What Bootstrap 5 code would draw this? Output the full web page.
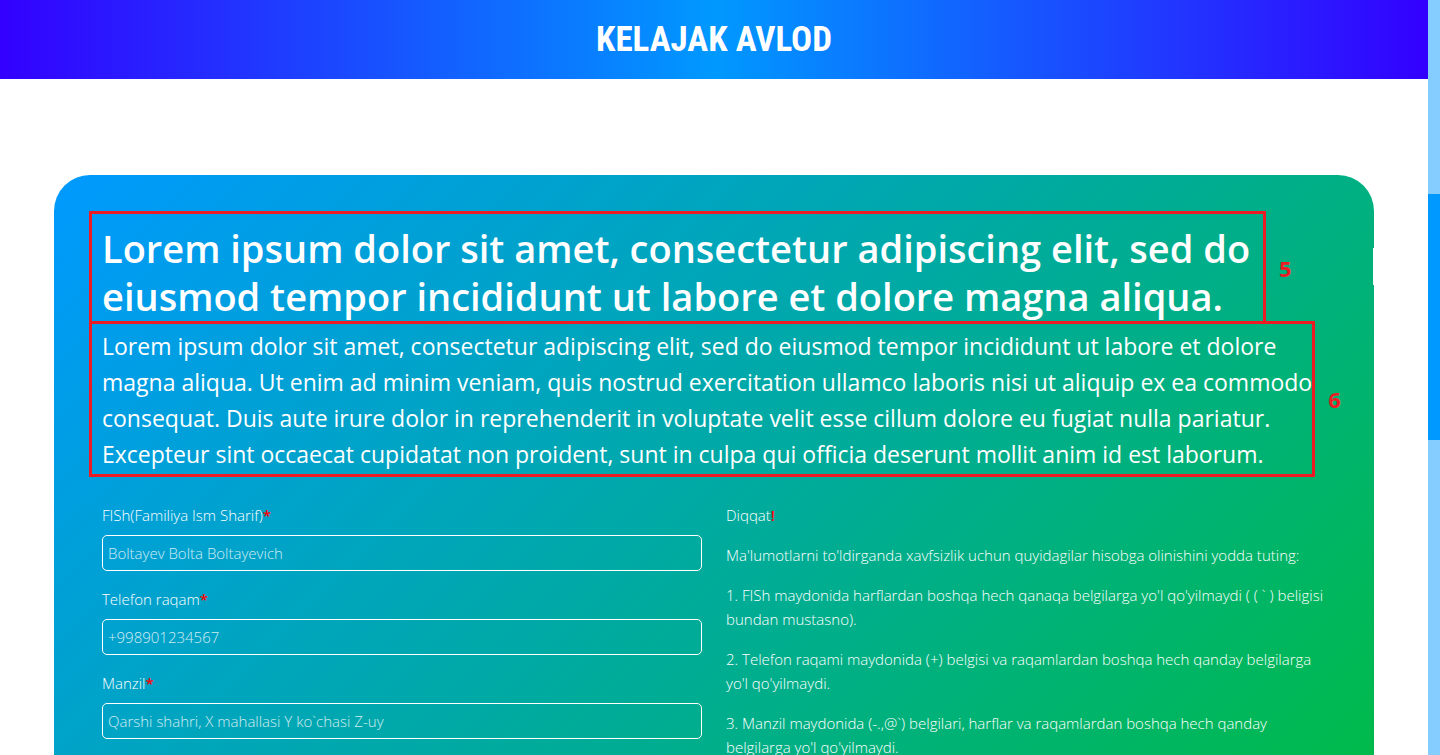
<!DOCTYPE html>
<html lang="uz">
<head>
<meta charset="utf-8">
<meta name="viewport" content="width=device-width, initial-scale=1">
<title>Kelajak Avlod</title>
<link href="https://cdn.jsdelivr.net/npm/bootstrap@5.3.0/dist/css/bootstrap.min.css" rel="stylesheet">
<style>
  body { font-family: "Open Sans", "Noto Sans", sans-serif; font-weight: 300; }
  .site-header { min-height: 79px; background: linear-gradient(90deg, #3300ff, #0099ff, #3300ff); }
  .site-logo { font: 700 35px/48px "Roboto Condensed", Roboto, sans-serif; }
  .page-main { padding-top: 96px; }
  .form-panel { position: relative; padding: 36px 48px 0 35px; min-height: 650px; border-radius: 36px 36px 0 0; background: linear-gradient(135deg, #0099ff, #00bb44); }
  .form-panel::after { content: ""; position: absolute; top: 73px; right: 0; width: 1px; height: 37px; background: #fff; }
  .frame { position: relative; border: 3px solid #ed1c24; padding-left: 10px; width: fit-content; white-space: nowrap; }
  .frame-title { min-width: min(1177px, 96%); padding-top: 10px; height: 113px; }
  .frame-text { min-width: min(1226px, 100%); margin-top: -3px; padding-top: 4px; height: 156px; }
  .frame-title h1 { font-size: 38px; font-weight: 600; line-height: 48px; }
  .frame-text p { font-size: 23px; font-weight: 400; line-height: 36px; }
  .frame-no { position: absolute; left: 100%; top: 50%; translate: 0 -50%; margin-left: 16px; color: #ed1c24; font-size: 22px; font-weight: 700; line-height: 30px; }
  .form-area { padding-left: 13px; margin-top: 26px; font-size: 15px; line-height: 24px; }
  .req { color: #f00; font-weight: 600; }
  .form-area .form-control { height: 36px; padding: 0 5px; background: transparent; border-color: #fff; border-radius: 5px; color: #fff; font-size: 15px; font-weight: 300; }
  .form-area .form-control::placeholder { color: #fff; opacity: .8; }
  .side-track { width: 12px; background: #85ccff; display: grid; grid-template-rows: 194fr 246fr 315fr; }
  .side-thumb { grid-row: 2; background: #0099ff; }
</style>
</head>
<body>
<div class="d-flex vh-100 overflow-hidden">
  <div class="flex-grow-1">
    <header class="site-header d-flex align-items-center justify-content-center">
      <a href="#" class="site-logo text-white text-decoration-none">KELAJAK AVLOD</a>
    </header>
    <main class="page-main">
      <div class="container px-0">
        <section class="form-panel text-white">
          <div class="frame frame-title">
            <h1 class="mb-0">Lorem ipsum dolor sit amet, consectetur adipiscing elit, sed do<br>eiusmod tempor incididunt ut labore et dolore magna aliqua.</h1>
            <span class="frame-no">5</span>
          </div>
          <div class="frame frame-text">
            <p class="mb-0">Lorem ipsum dolor sit amet, consectetur adipiscing elit, sed do eiusmod tempor incididunt ut labore et dolore<br>magna aliqua. Ut enim ad minim veniam, quis nostrud exercitation ullamco laboris nisi ut aliquip ex ea commodo<br>consequat. Duis aute irure dolor in reprehenderit in voluptate velit esse cillum dolore eu fugiat nulla pariatur.<br>Excepteur sint occaecat cupidatat non proident, sunt in culpa qui officia deserunt mollit anim id est laborum.</p>
            <span class="frame-no">6</span>
          </div>
          <div class="form-area">
            <div class="row">
              <form class="col-6">
                <div class="mb-3">
                  <label for="fish" class="d-block mb-2">FISh(Familiya Ism Sharif)<span class="req">*</span></label>
                  <input type="text" class="form-control" id="fish" placeholder="Boltayev Bolta Boltayevich">
                </div>
                <div class="mb-3">
                  <label for="tel" class="d-block mb-2">Telefon raqam<span class="req">*</span></label>
                  <input type="tel" class="form-control" id="tel" placeholder="+998901234567">
                </div>
                <div class="mb-3">
                  <label for="manzil" class="d-block mb-2">Manzil<span class="req">*</span></label>
                  <input type="text" class="form-control" id="manzil" placeholder="Qarshi shahri, X mahallasi Y ko`chasi Z-uy">
                </div>
              </form>
              <div class="col-6">
                <p>Diqqat<span class="req">!</span></p>
                <p>Ma'lumotlarni to'ldirganda xavfsizlik uchun quyidagilar hisobga olinishini yodda tuting:</p>
                <p>1. FISh maydonida harflardan boshqa hech qanaqa belgilarga yo'l qo'yilmaydi ( ( ` ) beligisi bundan mustasno).</p>
                <p>2. Telefon raqami maydonida (+) belgisi va raqamlardan boshqa hech qanday belgilarga yo'l qo'yilmaydi.</p>
                <p>3. Manzil maydonida (-.,@`) belgilari, harflar va raqamlardan boshqa hech qanday belgilarga yo'l qo'yilmaydi.</p>
              </div>
            </div>
          </div>
        </section>
      </div>
    </main>
  </div>
  <div class="side-track flex-shrink-0"><div class="side-thumb"></div></div>
</div>
<script src="https://cdn.jsdelivr.net/npm/bootstrap@5.3.0/dist/js/bootstrap.bundle.min.js"></script>
</body>
</html>
